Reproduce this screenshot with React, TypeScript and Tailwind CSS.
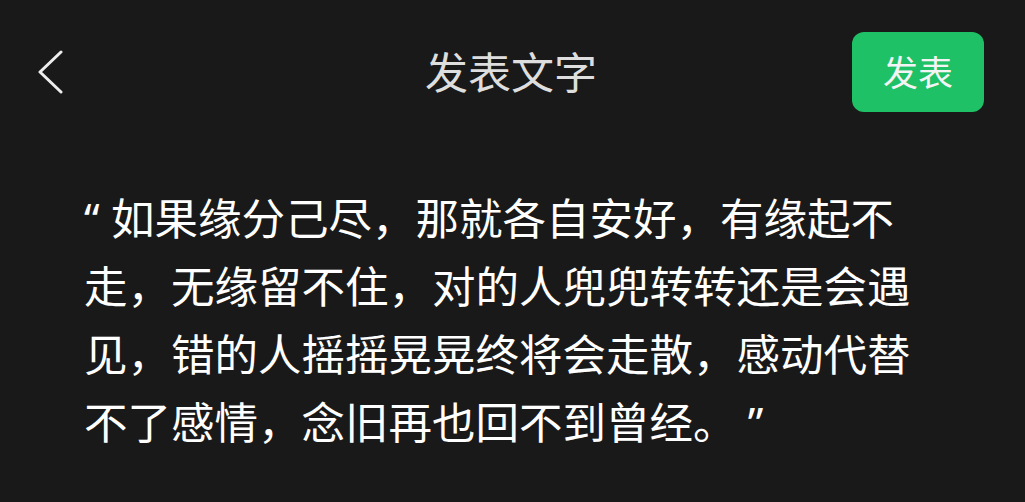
export default function App() {
  const lines = [
    '“ 如果缘分己尽，那就各自安好，有缘起不',
    '走，无缘留不住，对的人兜兜转转还是会遇',
    '见，错的人摇摇晃晃终将会走散，感动代替',
    '不了感情，念旧再也回不到曾经。 ”',
  ];

  return (
    <main
      className="h-[502px] w-full overflow-hidden bg-[#191919]"
      style={{ fontFamily: '"Noto Sans", "Noto Sans CJK SC", sans-serif' }}
    >
      <header className="grid h-[80px] grid-cols-[1fr_auto_1fr] items-center pl-[38px] pr-[41px] mt-[32px]">
        <button className="flex h-[44px] w-[30px] items-center justify-start">
          <svg width="26" height="44" viewBox="0 0 26 44" fill="none">
            <path
              d="M23 2 L2 22 L23 42"
              stroke="#ededed"
              strokeWidth="3"
              strokeLinecap="round"
              strokeLinejoin="round"
            />
          </svg>
        </button>
        <h1 className="text-[43px] leading-none text-[#dedede]">发表文字</h1>
        <div className="flex justify-end">
          <button className="flex h-[80px] w-[132px] items-center justify-center rounded-[12px] bg-[#1ec165] text-[35px] leading-none text-[#f4f4f4]">
            发表
          </button>
        </div>
      </header>

      <div className="mt-[72px] pl-[84px] text-[43.5px] leading-[68px] text-white">
        {lines.map((l) => (
          <p key={l} className="whitespace-nowrap">
            {l}
          </p>
        ))}
      </div>
    </main>
  );
}
